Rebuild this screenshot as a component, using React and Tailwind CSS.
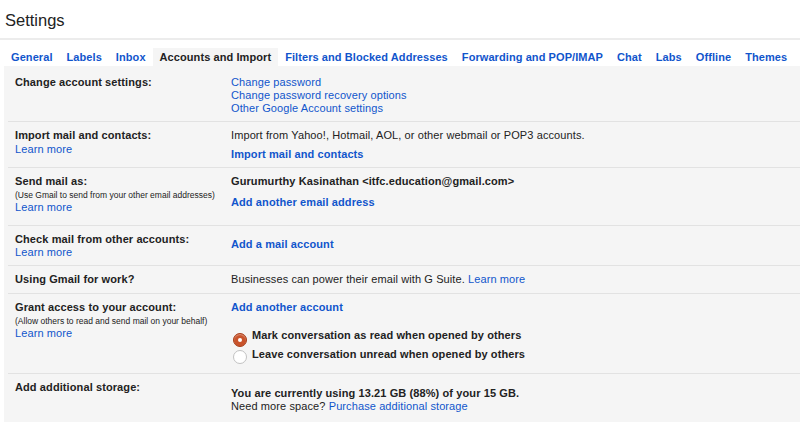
import React from "react";

const tabs = [
  "General",
  "Labels",
  "Inbox",
  "Accounts and Import",
  "Filters and Blocked Addresses",
  "Forwarding and POP/IMAP",
  "Chat",
  "Labs",
  "Offline",
  "Themes",
];

function A({ children, bold }) {
  return (
    <a href="#" className={bold ? "font-bold text-[#15c]" : "text-[#15c]"}>
      {children}
    </a>
  );
}

function Row({ h, pt = "pt-[7px]", label, sub, learn, learnMt = "", children, rightPt = "" }) {
  return (
    <div className={`flex ml-[4px] border-b border-[#e2e2e2] ${h} ${pt}`}>
      <div className="w-[223px] pl-[7px] shrink-0">
        <div className="font-bold text-[#222]">{label}</div>
        {sub && <div className="text-[8.5px] leading-[11px] mt-[2px] tracking-normal text-[#222]">{sub}</div>}
        {learn && (
          <div className={learnMt}>
            <A>Learn more</A>
          </div>
        )}
      </div>
      <div className={`flex-1 ${rightPt}`}>{children}</div>
    </div>
  );
}

function Radio({ checked }) {
  if (checked) {
    return (
      <span className="block w-[14px] h-[14px] rounded-full bg-[#c9532b] border border-[#a8401c] shadow-[inset_0_1px_1px_rgba(255,255,255,0.4)] relative">
        <span className="absolute left-[4px] top-[4px] w-[4px] h-[4px] rounded-full bg-white" />
      </span>
    );
  }
  return <span className="block w-[14px] h-[14px] rounded-full bg-white border border-[#c2c2c2]" />;
}

export default function App() {
  return (
    <div
      className="w-[800px] h-[422px] overflow-hidden bg-white text-[11px] leading-[13px] tracking-[0.1px] text-[#222]"
      style={{ fontFamily: '"Liberation Sans", Arial, sans-serif' }}
    >
      <div className="h-[38px] pl-[5px] pt-[10px] text-[16.5px] leading-[20px] tracking-normal text-[#222]">Settings</div>
      <div className="h-[2px] bg-[#ececec]" />
      <div className="h-[8px]" />
      <div className="flex pl-[4px] h-[18px]">
        {tabs.map((t) => (
          <div
            key={t}
            className={
              t === "Accounts and Import"
                ? "px-[7px] leading-[18px] font-bold tracking-[0.08px] bg-[#f5f5f5] text-[#222]"
                : "px-[7px] leading-[18px] font-bold tracking-[0.08px] text-[#15c]"
            }
          >
            {t}
          </div>
        ))}
      </div>
      <div className="ml-[4px] bg-[#f5f5f5] h-[356px]">
        <Row h="h-[56px]" pt="pt-[10px]" label="Change account settings:">
          <div><A>Change password</A></div>
          <div><A>Change password recovery options</A></div>
          <div><A>Other Google Account settings</A></div>
        </Row>
        <Row h="h-[46px]" label="Import mail and contacts:" learn learnMt="mt-[1px]">
          <div>Import from Yahoo!, Hotmail, AOL, or other webmail or POP3 accounts.</div>
          <div className="mt-[6px]"><A bold>Import mail and contacts</A></div>
        </Row>
        <Row
          h="h-[58px]"
          label="Send mail as:"
          sub="(Use Gmail to send from your other email addresses)"
          learn
        >
          <div className="font-bold">Gurumurthy Kasinathan &lt;itfc.education@gmail.com&gt;</div>
          <div className="mt-[8px]"><A bold>Add another email address</A></div>
        </Row>
        <Row h="h-[40px]" label="Check mail from other accounts:" learn rightPt="pt-[5px]">
          <A bold>Add a mail account</A>
        </Row>
        <Row h="h-[28px]" label="Using Gmail for work?">
          Businesses can power their email with G Suite. <A>Learn more</A>
        </Row>
        <Row
          h="h-[80px]"
          label="Grant access to your account:"
          sub="(Allow others to read and send mail on your behalf)"
          learn
        >
          <div><A bold>Add another account</A></div>
          <div className="mt-[12px] h-[19px] flex items-center gap-[5px] pl-[2px]">
            <span className="translate-y-[4px]"><Radio checked /></span>
            <span className="font-bold">Mark conversation as read when opened by others</span>
          </div>
          <div className="h-[19px] flex items-center gap-[5px] pl-[2px]">
            <span className="translate-y-[2px]"><Radio /></span>
            <span className="font-bold">Leave conversation unread when opened by others</span>
          </div>
        </Row>
        <div className="flex ml-[4px] pt-[7px]">
          <div className="w-[223px] pl-[7px] shrink-0 font-bold">Add additional storage:</div>
          <div className="flex-1 pt-[6px]">
            <div className="font-bold">You are currently using 13.21 GB (88%) of your 15 GB.</div>
            <div>
              Need more space? <A>Purchase additional storage</A>
            </div>
          </div>
        </div>
      </div>
    </div>
  );
}
